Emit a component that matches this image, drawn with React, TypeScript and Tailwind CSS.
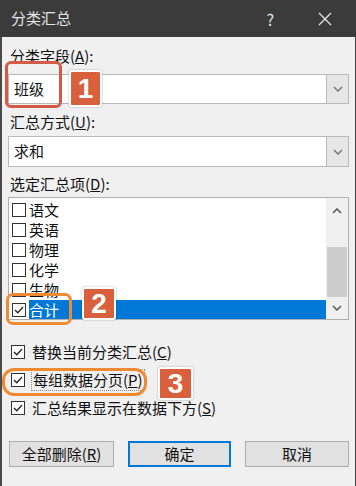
import React from 'react'

const FONT = { fontFamily: '"Noto Sans CJK SC", "Noto Sans", sans-serif' }

function Chevron({ up = false, className = '' }: { up?: boolean; className?: string }) {
  return (
    <svg width="10" height="6" viewBox="0 0 10 6" className={className}>
      <path
        d={up ? 'M1 5 L5 1 L9 5' : 'M1 1 L5 5 L9 1'}
        fill="none"
        stroke="currentColor"
        strokeWidth="1.5"
      />
    </svg>
  )
}

function Box({ checked = false }: { checked?: boolean }) {
  return (
    <span className="flex h-[14px] w-[14px] shrink-0 items-center justify-center border border-[#333] bg-white">
      {checked && (
        <svg width="10" height="8" viewBox="0 0 10 8">
          <path d="M1 4 L3.8 6.8 L9 1" fill="none" stroke="#222" strokeWidth="1.3" />
        </svg>
      )}
    </span>
  )
}

function Combo({ value, h }: { value: string; h: string }) {
  return (
    <div className={`flex ${h} border border-[#b9b9b9] bg-white`}>
      <div className="flex flex-1 items-center pl-[5px] text-[15px] text-[#111]">{value}</div>
      <div className="flex w-[22px] items-center justify-center border-l border-[#b9b9b9] bg-[#e6e6e6] text-[#777]">
        <Chevron />
      </div>
    </div>
  )
}

function Badge({ n, className }: { n: string; className: string }) {
  return (
    <div
      className={`absolute flex items-center justify-center rounded-[3px] border-2 border-white bg-[#d8603d] text-[28px] font-bold leading-none text-white shadow-[0_0_2px_rgba(0,0,0,0.35)] ${className}`}
      style={{ fontFamily: '"Liberation Sans", Arial, sans-serif' }}
    >
      {n}
    </div>
  )
}

const ITEMS = ['语文', '英语', '物理', '化学', '生物']

export default function App() {
  return (
    <div className="relative h-[486px] w-[356px] overflow-hidden bg-[#f0f0f0]" style={FONT}>
      {/* title bar */}
      <div className="flex h-[37px] items-center bg-[#3b3b3b] pl-[11px] pr-[24px] text-[#e6e6e6]">
        <span className="text-[15px]">分类汇总</span>
        <span className="ml-auto mr-[44px] text-[16px]">?</span>
        <svg width="14" height="14" viewBox="0 0 14 14">
          <path d="M1 1 L13 13 M13 1 L1 13" stroke="#e6e6e6" strokeWidth="1.3" />
        </svg>
      </div>

      <div className="flex h-[449px] flex-col border-l-2 border-r border-[#4a4a4a] px-[6px] text-[15px] text-[#111]">
        <div className="mt-[9px] h-[20px] pl-[2px] leading-[20px]">
          分类字段(<span className="underline">A</span>):
        </div>
        <div className="mt-[8px]">
          <Combo value="班级" h="h-[30px]" />
        </div>

        <div className="mt-[8px] h-[20px] pl-[2px] leading-[20px]">
          汇总方式(<span className="underline">U</span>):
        </div>
        <div className="mt-[4px]">
          <Combo value="求和" h="h-[31px]" />
        </div>

        <div className="mt-[7px] h-[20px] pl-[2px] leading-[20px]">
          选定汇总项(<span className="underline">D</span>):
        </div>

        {/* list box */}
        <div className="mt-[3px] flex h-[123px] border border-[#b0b0b0] bg-white">
          <div className="flex flex-1 flex-col overflow-hidden pt-[2px]">
            {ITEMS.map((it) => (
              <div key={it} className="flex h-[20px] shrink-0 items-center gap-[3px] pl-[3px]">
                <Box />
                <span className="leading-[20px]">{it}</span>
              </div>
            ))}
            <div className="flex h-[20px] shrink-0 items-center gap-[3px] pl-[3px]">
              <Box checked />
              <span className="flex h-[20px] flex-1 items-center bg-[#0078d7] leading-[20px] text-white">合计</span>
            </div>
          </div>
          <div className="flex w-[22px] flex-col bg-[#f0f0f0] text-[#555]">
            <div className="flex h-[26px] items-center justify-center">
              <Chevron up />
            </div>
            <div className="h-[23px]" />
            <div className="mx-[1px] h-[50px] bg-[#cdcdcd]" />
            <div className="flex flex-1 items-center justify-center">
              <Chevron />
            </div>
          </div>
        </div>

        {/* options */}
        <div className="mt-[18px] flex flex-col">
          <div className="flex h-[28px] items-center gap-[7px] pl-[3px]">
            <Box checked />
            <span>
              替换当前分类汇总(<span className="underline">C</span>)
            </span>
          </div>
          <div className="flex h-[28px] items-center gap-[6px] pl-[3px]">
            <Box checked />
            <span className="border border-dotted border-[#888] px-[1px] leading-[20px]">
              每组数据分页(<span className="underline">P</span>)
            </span>
          </div>
          <div className="flex h-[28px] items-center gap-[7px] pl-[3px]">
            <Box checked />
            <span>
              汇总结果显示在数据下方(<span className="underline">S</span>)
            </span>
          </div>
        </div>

        {/* buttons */}
        <div className="mt-[19px] flex h-[26px] gap-[14px] pl-[1px]">
          <button className="w-[105px] border border-[#adadad] bg-[#e1e1e1] text-[15px] text-[#111]">
            全部删除(<span className="underline">R</span>)
          </button>
          <button className="w-[103px] border-2 border-[#0078d7] bg-[#e1e1e1] text-[15px] text-[#111]">
            确定
          </button>
          <button className="w-[104px] border border-[#adadad] bg-[#e1e1e1] text-[15px] text-[#111]">
            取消
          </button>
        </div>
      </div>

      {/* annotations */}
      <div className="absolute left-[5px] top-[61px] h-[47px] w-[57px] rounded-[6px] border-[3px] border-[#d35a45]" />
      <Badge n="1" className="left-[69px] top-[70px] h-[37px] w-[33px]" />

      <div className="absolute left-[6px] top-[293px] h-[32px] w-[66px] rounded-[7px] border-[3px] border-[#ef8a34]" />
      <Badge n="2" className="left-[82px] top-[287px] h-[33px] w-[34px]" />

      <div className="absolute left-[2px] top-[368px] h-[28px] w-[145px] rounded-[12px] border-[3px] border-[#ef8a34]" />
      <Badge n="3" className="left-[158px] top-[367px] h-[33px] w-[35px]" />
    </div>
  )
}
